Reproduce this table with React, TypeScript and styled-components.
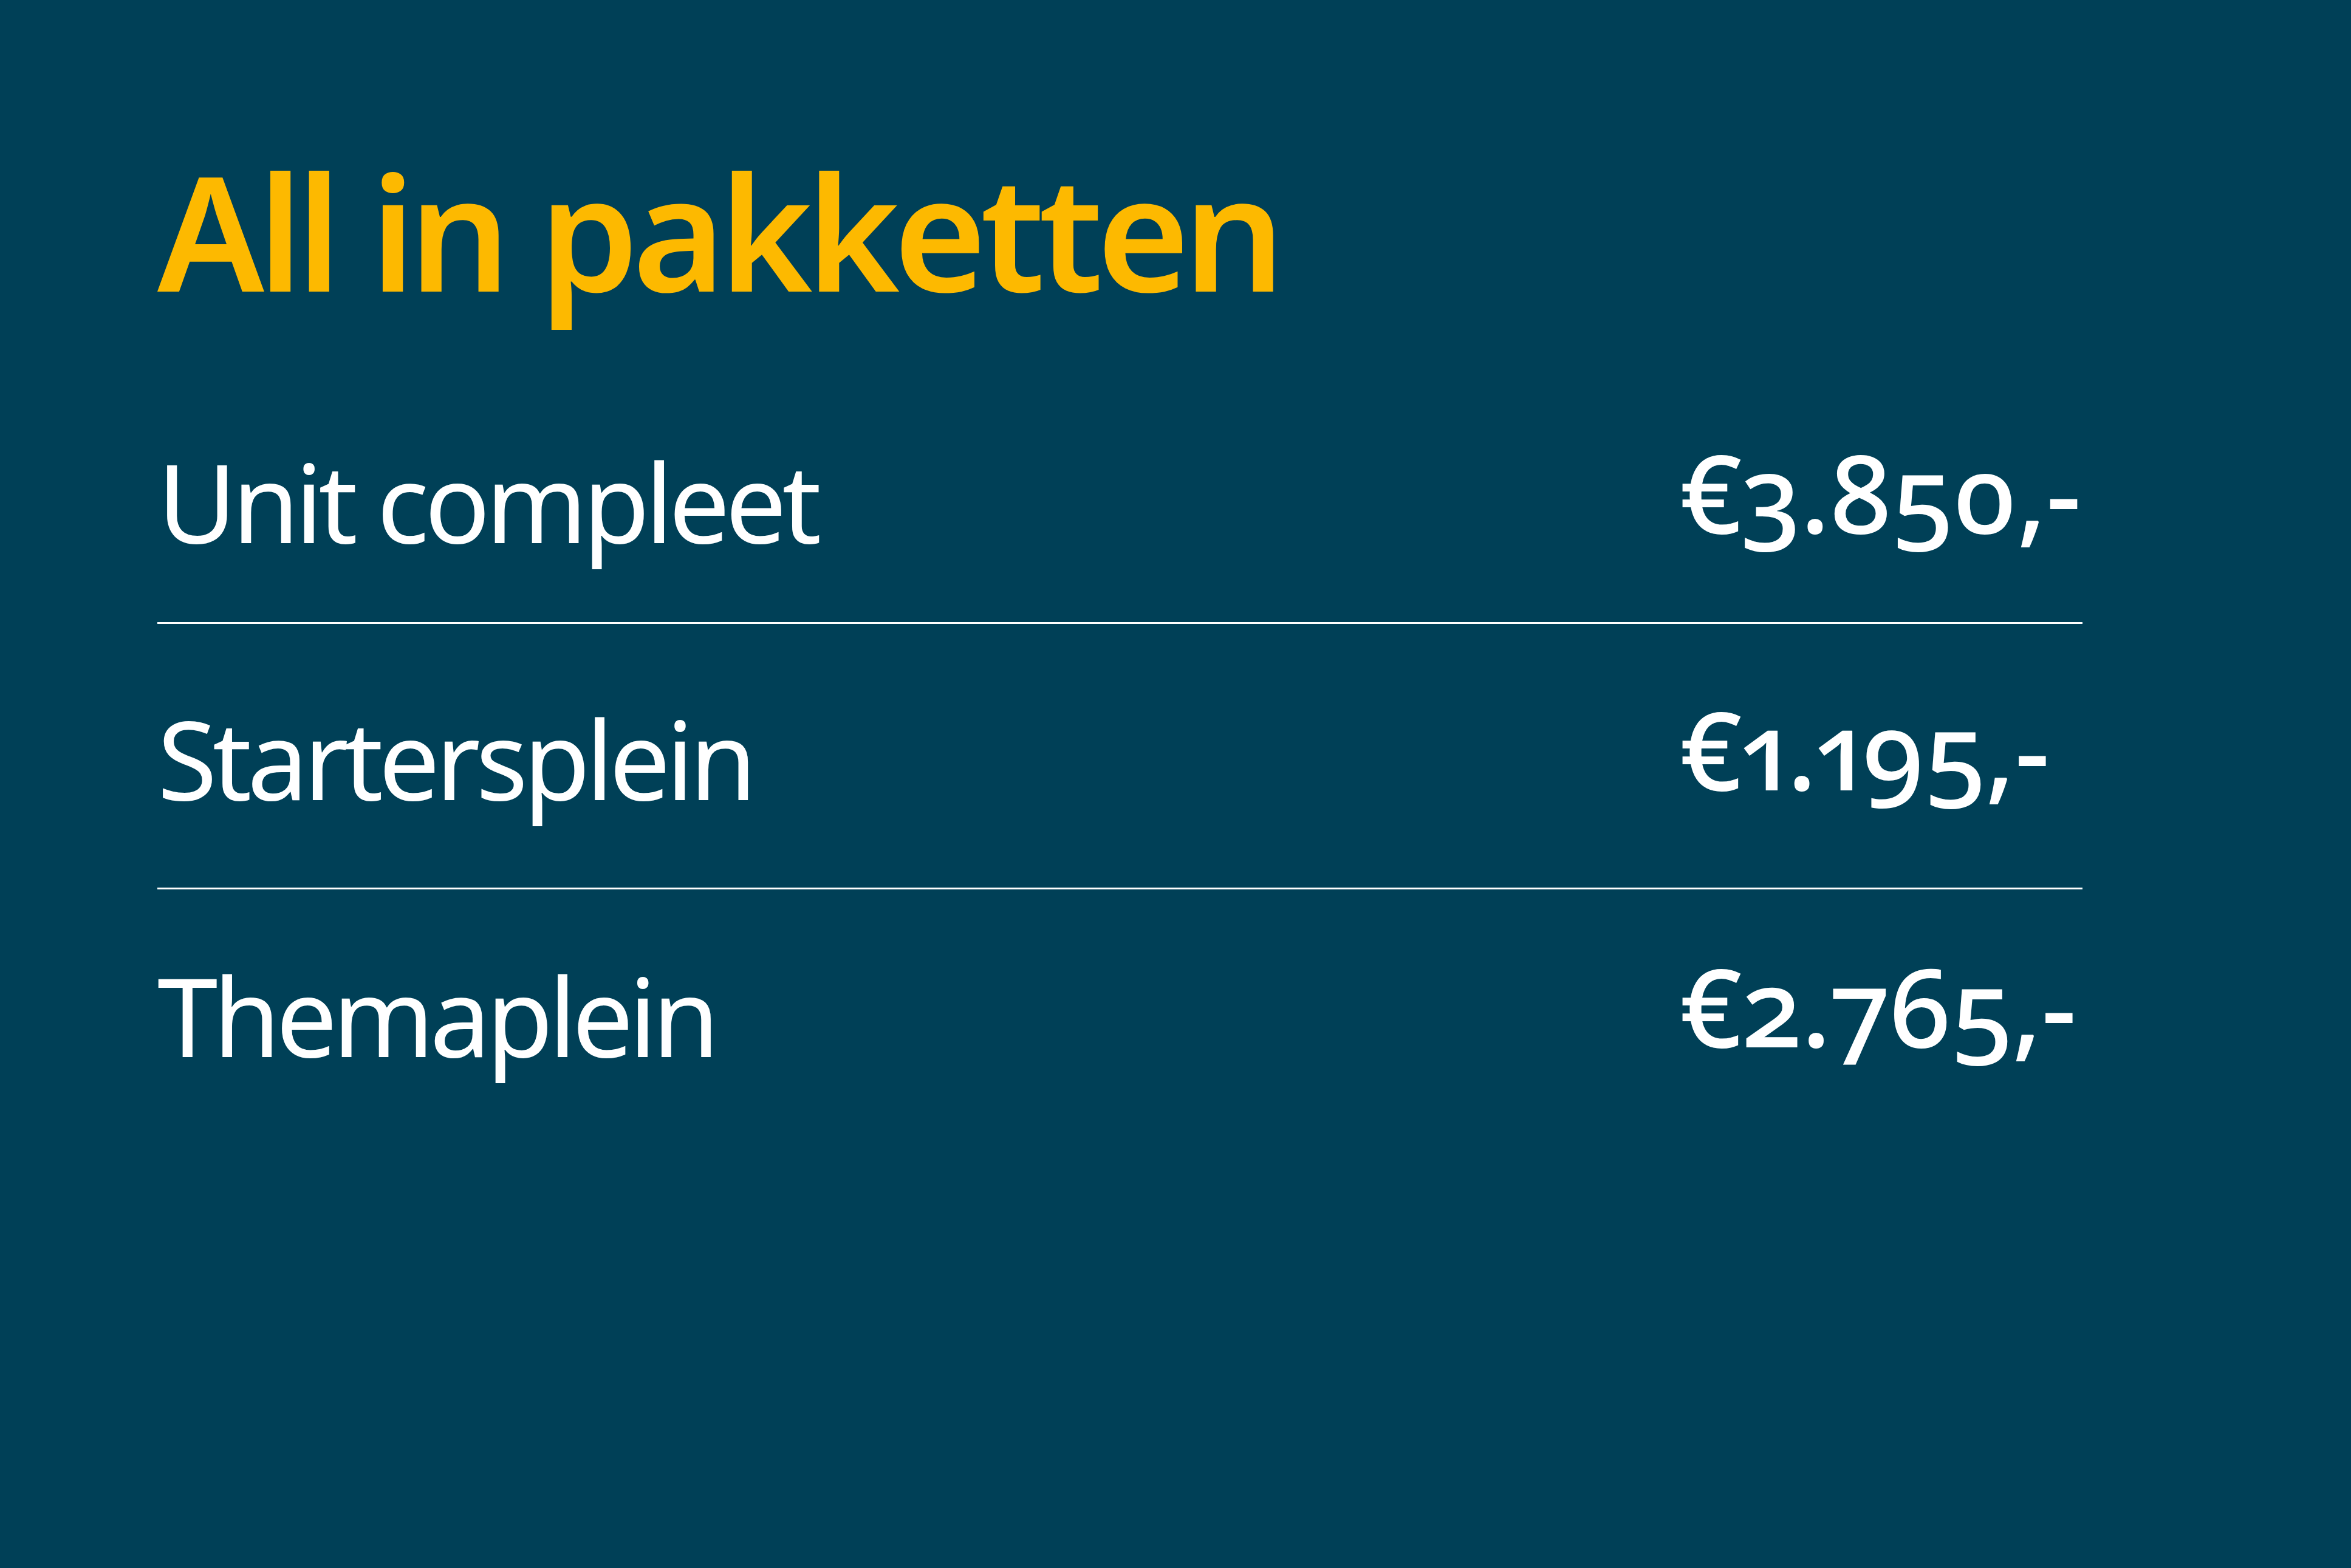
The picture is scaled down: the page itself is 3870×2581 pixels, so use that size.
import styled, { createGlobalStyle } from "styled-components";

const GlobalStyle = createGlobalStyle`
  html, body {
    margin: 0;
    padding: 0;
    background-color: #004057;
  }
`;

const Page = styled.main`
  width: 100vw;
  min-height: 100vh;
  box-sizing: border-box;
  padding: 248px 0 0 259px;
  background-color: #004057;
  font-family: "Noto Sans", "Open Sans", sans-serif;
`;

const Title = styled.h1`
  margin: 0 0 101px 0;
  font-size: 262px;
  line-height: 1;
  font-weight: 600;
  letter-spacing: -10.5px;
  color: #fdb900;
`;

const PriceList = styled.ul`
  width: 3169px;
  margin: 0;
  padding: 0;
  list-style: none;
`;

const Row = styled.li`
  display: grid;
  grid-template-columns: 2506px 1fr;
  align-items: start;
  padding: 124px 0 117px 0;
  border-bottom: 3px solid #ffffff;

  &:first-child {
    padding-bottom: 110px;
  }
  &:nth-child(2) {
    padding-top: 131px;
    padding-bottom: 124px;
  }
  &:last-child {
    padding-top: 117px;
    border-bottom: none;
  }
`;

const Label = styled.span`
  font-size: 179px;
  line-height: 1;
  font-weight: 400;
  letter-spacing: -7.5px;
  color: #ffffff;
`;

const Price = styled.span`
  font-size: 179px;
  line-height: 1;
  font-weight: 500;
  letter-spacing: -0.5px;
  color: #ffffff;
  font-variant-numeric: oldstyle-nums proportional-nums;
  margin-top: -16px;
`;

const packages = [
  { name: "Unit compleet", price: "€3.850,-" },
  { name: "Startersplein", price: "€1.195,-" },
  { name: "Themaplein", price: "€2.765,-" },
];

const App = () => {
  return (
    <>
      <GlobalStyle />
      <Page>
        <Title>All in pakketten</Title>
        <PriceList>
          {packages.map((p) => (
            <Row key={p.name}>
              <Label>{p.name}</Label>
              <Price>{p.price}</Price>
            </Row>
          ))}
        </PriceList>
      </Page>
    </>
  );
};

export default App;
